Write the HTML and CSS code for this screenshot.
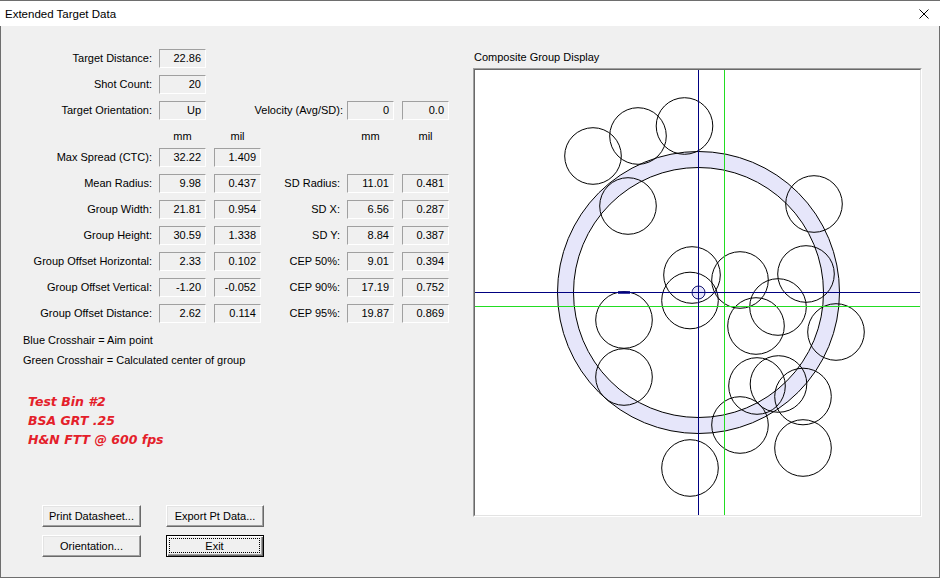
FILE: index.html
```html
<!DOCTYPE html>
<html>
<head>
<meta charset="utf-8">
<title>Extended Target Data</title>
<link rel="stylesheet" href="styles.css">
</head>
<body>
<div class="window">
  <div class="titlebar">
    <span class="title">Extended Target Data</span>
    <svg class="close" width="10" height="10" viewBox="0 0 10 10"><path d="M0.5 0.5 L9.5 9.5 M9.5 0.5 L0.5 9.5" stroke="#000" stroke-width="1" fill="none"/></svg>
  </div>
  <div class="content">
    <div class="left">
      <div class="fields">
        <div class="lbl r1">Target Distance:</div><div class="box c2 r1">22.86</div>
        <div class="lbl r2">Shot Count:</div><div class="box c2 r2">20</div>
        <div class="lbl r3">Target Orientation:</div><div class="box c2 r3">Up</div>
        <div class="rlbl vel r3">Velocity (Avg/SD):</div><div class="box c5 r3">0</div><div class="box c6 r3">0.0</div>

        <div class="hdr c2 r4">mm</div><div class="hdr c3 r4">mil</div>
        <div class="hdr c5 r4">mm</div><div class="hdr c6 r4">mil</div>

        <div class="lbl r5">Max Spread (CTC):</div><div class="box c2 r5">32.22</div><div class="box c3 r5">1.409</div>

        <div class="lbl r6">Mean Radius:</div><div class="box c2 r6">9.98</div><div class="box c3 r6">0.437</div>
        <div class="rlbl r6">SD Radius:</div><div class="box c5 r6">11.01</div><div class="box c6 r6">0.481</div>

        <div class="lbl r7">Group Width:</div><div class="box c2 r7">21.81</div><div class="box c3 r7">0.954</div>
        <div class="rlbl r7">SD X:</div><div class="box c5 r7">6.56</div><div class="box c6 r7">0.287</div>

        <div class="lbl r8">Group Height:</div><div class="box c2 r8">30.59</div><div class="box c3 r8">1.338</div>
        <div class="rlbl r8">SD Y:</div><div class="box c5 r8">8.84</div><div class="box c6 r8">0.387</div>

        <div class="lbl r9">Group Offset Horizontal:</div><div class="box c2 r9">2.33</div><div class="box c3 r9">0.102</div>
        <div class="rlbl r9">CEP 50%:</div><div class="box c5 r9">9.01</div><div class="box c6 r9">0.394</div>

        <div class="lbl r10">Group Offset Vertical:</div><div class="box c2 r10">-1.20</div><div class="box c3 r10">-0.052</div>
        <div class="rlbl r10">CEP 90%:</div><div class="box c5 r10">17.19</div><div class="box c6 r10">0.752</div>

        <div class="lbl r11">Group Offset Distance:</div><div class="box c2 r11">2.62</div><div class="box c3 r11">0.114</div>
        <div class="rlbl r11">CEP 95%:</div><div class="box c5 r11">19.87</div><div class="box c6 r11">0.869</div>
      </div>

      <div class="legend">
        <div>Blue Crosshair = Aim point</div>
        <div>Green Crosshair = Calculated center of group</div>
      </div>

      <div class="note">
        <div>Test Bin #2</div>
        <div>BSA GRT .25</div>
        <div>H&amp;N FTT @ 600 fps</div>
      </div>

      <div class="buttons">
        <button class="btn">Print Datasheet...</button>
        <button class="btn">Export Pt Data...</button>
        <button class="btn">Orientation...</button>
        <button class="btn default"><span class="focus">Exit</span></button>
      </div>
    </div>

    <div class="right">
      <div class="caption">Composite Group Display</div>
      <div class="display">
        <div class="display-inner">
          <svg class="plot" width="445" height="445" viewBox="475 70 445 445">
            <rect x="475" y="70" width="445" height="445" fill="#fff"/>
            <circle cx="698.5" cy="292.5" r="133" fill="none" stroke="#e6e6fa" stroke-width="16"/>
            <circle cx="698.5" cy="292.5" r="141" fill="none" stroke="#000" stroke-width="1"/>
            <circle cx="698.5" cy="292.5" r="125" fill="none" stroke="#000" stroke-width="1"/>
            <g fill="none" stroke="#000" stroke-width="1">
              <circle cx="593" cy="156" r="28.3"/>
              <circle cx="638" cy="136" r="28.3"/>
              <circle cx="684.5" cy="126" r="28.3"/>
              <circle cx="628" cy="206" r="28.3"/>
              <circle cx="814" cy="204" r="28.3"/>
              <circle cx="692" cy="275" r="28.3"/>
              <circle cx="690" cy="300.5" r="28.3"/>
              <circle cx="740" cy="280" r="28.3"/>
              <circle cx="806" cy="274" r="28.3"/>
              <circle cx="778" cy="307" r="28.3"/>
              <circle cx="756" cy="326" r="28.3"/>
              <circle cx="836" cy="332" r="28.3"/>
              <circle cx="624" cy="320" r="28.3"/>
              <circle cx="624" cy="377" r="28.3"/>
              <circle cx="757" cy="386" r="28.3"/>
              <circle cx="778.5" cy="384" r="28.3"/>
              <circle cx="803" cy="396.5" r="28.3"/>
              <circle cx="740" cy="425" r="28.3"/>
              <circle cx="803" cy="448" r="28.3"/>
              <circle cx="690" cy="468" r="28.3"/>
            </g>
            <line x1="475" y1="306.5" x2="920" y2="306.5" stroke="#22dd22" stroke-width="1"/>
            <line x1="724.5" y1="70" x2="724.5" y2="515" stroke="#22dd22" stroke-width="1"/>
            <line x1="475" y1="292.5" x2="920" y2="292.5" stroke="#000080" stroke-width="1"/>
            <line x1="698.5" y1="70" x2="698.5" y2="515" stroke="#000080" stroke-width="1"/>
            <circle cx="698.5" cy="292.5" r="6.5" fill="#e6e6fa" stroke="#1a1a70" stroke-width="1"/>
            <line x1="698.5" y1="286" x2="698.5" y2="299" stroke="#000080" stroke-width="1"/>
            <line x1="692" y1="292.5" x2="705" y2="292.5" stroke="#000080" stroke-width="1"/>
            <line x1="618" y1="292.5" x2="630" y2="292.5" stroke="#000080" stroke-width="2.5"/>
          </svg>
        </div>
      </div>
    </div>
  </div>
</div>
</body>
</html>
```

FILE: styles.css
```css
* { box-sizing: border-box; }

html, body {
  margin: 0;
  padding: 0;
  width: 940px;
  height: 578px;
  overflow: hidden;
}

body {
  font-family: "Liberation Sans", Arial, sans-serif;
  font-size: 11px;
  color: #000;
  background: #f0f0f0;
}

.window {
  width: 940px;
  height: 578px;
  background: #f0f0f0;
  box-shadow: inset 0 0 0 1px #6e6e6e;
  padding-top: 1px;
}

.titlebar {
  height: 25px;
  background: #fff;
  display: flex;
  align-items: center;
  justify-content: space-between;
  padding-left: 5px;
  padding-right: 11px;
}

.title {
  font-size: 11.5px;
  line-height: 14px;
  margin-top: 0px;
}

.close {
  display: block;
  margin-top: 1px;
}

.content {
  display: flex;
}

.left {
  width: 473px;
  flex: none;
}

.fields {
  margin-top: 23px;
  display: grid;
  grid-template-columns: 152px 47px 48px 72px 47px 48px;
  grid-template-rows: 19px 19px 19px 14px repeat(7, 19px);
  column-gap: 7px;
  row-gap: 7px;
}

.lbl {
  grid-column: 1;
  text-align: right;
  line-height: 18px;
  white-space: nowrap;
}

.rlbl {
  grid-column: 4;
  text-align: right;
  line-height: 18px;
  white-space: nowrap;
}

.rlbl.vel {
  grid-column: 3 / 5;
  margin-right: -3px;
}

.box {
  width: 47px;
  height: 19px;
  border: 1px solid;
  border-color: #a0a0a0 #ffffff #ffffff #a0a0a0;
  background: #f0f0f0;
  text-align: right;
  padding-right: 4px;
  line-height: 17px;
  justify-self: end;
  white-space: nowrap;
}

.hdr {
  text-align: center;
  line-height: 19px;
  height: 14px;
}

.hdr.c3, .hdr.c6 { padding-left: 1px; }

.c2 { grid-column: 2; }
.c3 { grid-column: 3; }
.c5 { grid-column: 5; }
.c6 { grid-column: 6; }

.r1 { grid-row: 1; }
.r2 { grid-row: 2; }
.r3 { grid-row: 3; }
.r4 { grid-row: 4; }
.r5 { grid-row: 5; }
.r6 { grid-row: 6; }
.r7 { grid-row: 7; }
.r8 { grid-row: 8; }
.r9 { grid-row: 9; }
.r10 { grid-row: 10; }
.r11 { grid-row: 11; }

.legend {
  margin-top: 7px;
  padding-left: 23px;
  line-height: 20px;
}

.note {
  margin-top: 22px;
  padding-left: 28px;
  line-height: 19px;
  color: #e4202a;
  font-family: "DejaVu Sans", "Liberation Sans", sans-serif;
  font-weight: bold;
  font-style: italic;
  font-size: 12.5px;
  height: 57px;
}

.buttons {
  margin-top: 56px;
  padding-left: 42px;
  display: grid;
  grid-template-columns: 99px 98px;
  grid-template-rows: 22px 22px;
  column-gap: 25px;
  row-gap: 8px;
}

.btn {
  font-family: "Liberation Sans", Arial, sans-serif;
  font-size: 11px;
  color: #000;
  background: #f0f0f0;
  border: 1px solid;
  border-color: #ffffff #696969 #696969 #ffffff;
  box-shadow: inset -1px -1px 0 #a0a0a0, inset 1px 1px 0 #e3e3e3;
  padding: 0;
  margin: 0;
  height: 22px;
  line-height: 18px;
  text-align: center;
}

.btn.default {
  border-color: #000;
  box-shadow: inset 1px 1px 0 #ffffff, inset -1px -1px 0 #696969, inset -2px -2px 0 #a0a0a0;
  padding: 2px 3px 3px 2px;
}

.focus {
  display: block;
  height: 100%;
  border: 1px dotted #000;
  line-height: 14px;
}

.right {
  flex: none;
}

.caption {
  margin-top: 24px;
  padding-left: 1px;
  line-height: 14px;
}

.display {
  margin-top: 4px;
  width: 449px;
  height: 449px;
  border: 1px solid;
  border-color: #a0a0a0 #ffffff #ffffff #a0a0a0;
}

.display-inner {
  width: 447px;
  height: 447px;
  border: 1px solid;
  border-color: #696969 #e3e3e3 #e3e3e3 #696969;
}

.plot {
  display: block;
}
```
